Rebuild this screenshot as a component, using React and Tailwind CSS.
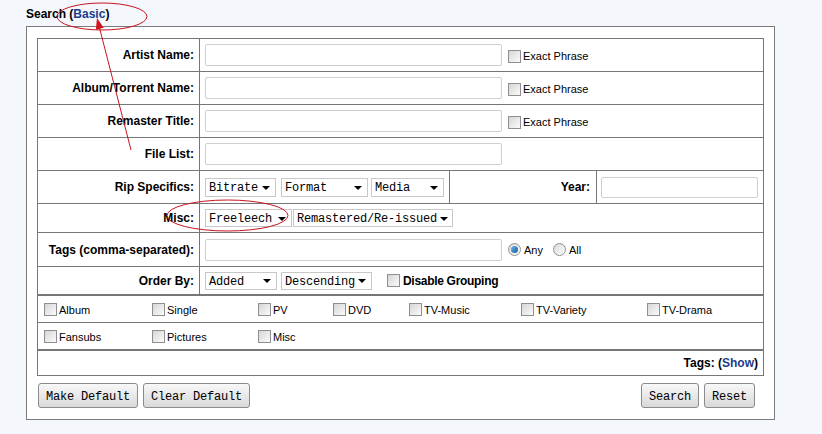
import React from 'react';

// small form controls drawn the way the old XP page shows them
function Check() {
  return <span className="inline-block w-[13px] h-[13px] shrink-0 border border-[#8f8f8f] bg-linear-to-br from-[#d6d6d6] to-[#fbfbfb]" />;
}

function Radio({ on }) {
  return (
    <span className="relative inline-flex items-center justify-center w-[13px] h-[13px] shrink-0 rounded-full border border-[#8f8f8f] bg-linear-to-br from-[#d9d9d9] to-[#fdfdfd]">
      {on && <span className="w-[7px] h-[7px] rounded-full bg-linear-to-br from-[#6fb6ea] to-[#0f5a9c]" />}
    </span>
  );
}

function Select({ label, className }) {
  return (
    <div className={`flex items-center justify-between shrink-0 whitespace-nowrap border border-[#c8c8c8] bg-white pl-[3px] pr-[5px] font-['Liberation_Mono',monospace] text-[12px] tracking-[-0.2px] leading-none ${className}`}>
      <span className="pt-[2px]">{label}</span>
      <svg width="8" height="4" viewBox="0 0 8 4" className="ml-[3px] mt-[1px] shrink-0">
        <path d="M0 0h8L4 4z" fill="#000" />
      </svg>
    </div>
  );
}

function TextBox({ className }) {
  return <div className={`shrink-0 border border-[#cfcfcf] rounded-[2px] bg-white ${className}`} />;
}

function Label({ children }) {
  return (
    <div className="w-[162px] shrink-0 h-full border-r border-[#777] flex items-center justify-end pr-[5px] font-bold text-[12px]">
      {children}
    </div>
  );
}

function Exact() {
  return (
    <div className="flex items-center ml-[6px] pt-[2px]">
      <Check />
      <span className="ml-[2px] text-[11px]">Exact Phrase</span>
    </div>
  );
}

function Button({ children, className }) {
  return (
    <div className={`h-[25px] flex items-center justify-center pt-[2px] whitespace-nowrap border border-[#8b8b8b] rounded-[3px] bg-linear-to-b from-[#f8f8f8] to-[#d9d9d9] font-['Liberation_Mono',monospace] text-[12px] tracking-[-0.2px] ${className}`}>
      {children}
    </div>
  );
}

const cats = [
  ['Album', 'Single', 'PV', 'DVD', 'TV-Music', 'TV-Variety', 'TV-Drama'],
  ['Fansubs', 'Pictures', 'Misc'],
];

export default function App() {
  return (
    <div className="relative w-[822px] h-[434px] bg-[#f4f7fb] text-black font-['Liberation_Sans',Arial,sans-serif] overflow-hidden">
      <div className="pl-[26px] pt-[7px] h-[21px] leading-[14px] text-[12px] font-bold">
        Search (<span className="text-[#1b3c8c]">Basic</span>)
      </div>

      <div className="ml-[26px] mt-[5px] w-[749px] border border-[#7b7b7b] bg-white pt-[11px] px-[10px] pb-[11px]">
        <div className="border border-[#777]">
          <div className="flex h-[33px] border-b border-[#777]">
            <Label>Artist Name:</Label>
            <div className="flex items-center pl-[5px]">
              <TextBox className="w-[297px] h-[22px]" />
              <Exact />
            </div>
          </div>
          <div className="flex h-[33px] border-b border-[#777]">
            <Label>Album/Torrent Name:</Label>
            <div className="flex items-center pl-[5px]">
              <TextBox className="w-[297px] h-[22px]" />
              <Exact />
            </div>
          </div>
          <div className="flex h-[33px] border-b border-[#777]">
            <Label>Remaster Title:</Label>
            <div className="flex items-center pl-[5px]">
              <TextBox className="w-[297px] h-[22px]" />
              <Exact />
            </div>
          </div>
          <div className="flex h-[33px] border-b border-[#777]">
            <Label>File List:</Label>
            <div className="flex items-center pl-[5px]">
              <TextBox className="w-[297px] h-[22px]" />
            </div>
          </div>
          <div className="flex h-[33px] border-b border-[#777]">
            <Label>Rip Specifics:</Label>
            <div className="w-[250px] shrink-0 h-full border-r border-[#777] flex items-center pl-[5px]">
              <Select label="Bitrate" className="w-[71px] h-[19px]" />
              <Select label="Format" className="w-[87px] h-[19px] ml-[5px]" />
              <Select label="Media" className="w-[73px] h-[19px] ml-[3px]" />
            </div>
            <div className="w-[147px] shrink-0 h-full border-r border-[#777] flex items-center justify-end pr-[6px] font-bold text-[12px]">
              Year:
            </div>
            <div className="flex items-center pl-[4px]">
              <TextBox className="w-[157px] h-[21px]" />
            </div>
          </div>
          <div className="flex h-[29px] border-b border-[#777]">
            <Label>Misc:</Label>
            <div className="flex items-center pl-[5px]">
              <Select label="Freeleech" className="w-[87px] h-[18px]" />
              <Select label="Remastered/Re-issued" className="w-[160px] h-[18px] ml-[1px]" />
            </div>
          </div>
          <div className="flex h-[34px] border-b border-[#777]">
            <Label>Tags (comma-separated):</Label>
            <div className="flex items-center pl-[5px] text-[11px]">
              <TextBox className="w-[297px] h-[22px]" />
              <span className="ml-[6px] flex"><Radio on /></span>
              <span className="ml-[3px] pt-[2px]">Any</span>
              <span className="ml-[10px] flex"><Radio /></span>
              <span className="ml-[3px] pt-[2px]">All</span>
            </div>
          </div>
          <div className="flex h-[29px] border-b-2 border-[#777]">
            <Label>Order By:</Label>
            <div className="flex items-center pl-[5px]">
              <Select label="Added" className="w-[72px] h-[18px]" />
              <Select label="Descending" className="w-[91px] h-[18px] ml-[4px]" />
              <span className="ml-[15px] flex"><Check /></span>
              <span className="ml-[3px] font-bold text-[12px] tracking-[-0.3px]">Disable Grouping</span>
            </div>
          </div>
          {cats.map((row, i) => (
            <div
              key={i}
              className={i === 0
                ? 'grid grid-cols-[108px_106px_75px_76px_112px_126px_1fr] items-center h-[27px] border-b border-[#777] pl-[6px] text-[11px]'
                : 'grid grid-cols-[108px_106px_75px_76px_112px_126px_1fr] items-center h-[28px] border-b-2 border-[#777] pl-[6px] text-[11px]'}
            >
              {row.map((c) => (
                <div key={c} className="flex items-center">
                  <Check />
                  <span className="ml-[2px] pt-[2px]">{c}</span>
                </div>
              ))}
            </div>
          ))}
          <div className="flex items-center justify-end h-[24px] pr-[5px] font-bold text-[12px]">
            Tags: (<span className="text-[#1b3c8c]">Show</span>)
          </div>
        </div>

        <div className="flex justify-between mt-[7px] pl-[1px] pr-[9px]">
          <div className="flex">
            <Button className="w-[100px]">Make Default</Button>
            <Button className="w-[107px] ml-[5px]">Clear Default</Button>
          </div>
          <div className="flex">
            <Button className="w-[58px]">Search</Button>
            <Button className="w-[51px] ml-[5px]">Reset</Button>
          </div>
        </div>
      </div>

      {/* red hand-drawn annotations over the form */}
      <svg className="absolute left-0 top-0 pointer-events-none" width="822" height="434" viewBox="0 0 822 434">
        <ellipse cx="102" cy="16.5" rx="45" ry="13.5" fill="none" stroke="#c8141e" strokeWidth="1" />
        <line x1="131" y1="150" x2="99" y2="26" stroke="#c8141e" strokeWidth="1" />
        <polygon points="97,18 103.7,27.7 95.9,29.7" fill="#d0141e" />
        <ellipse cx="227.5" cy="215.5" rx="60.5" ry="15.5" fill="none" stroke="#c8141e" strokeWidth="1" />
      </svg>
    </div>
  );
}
